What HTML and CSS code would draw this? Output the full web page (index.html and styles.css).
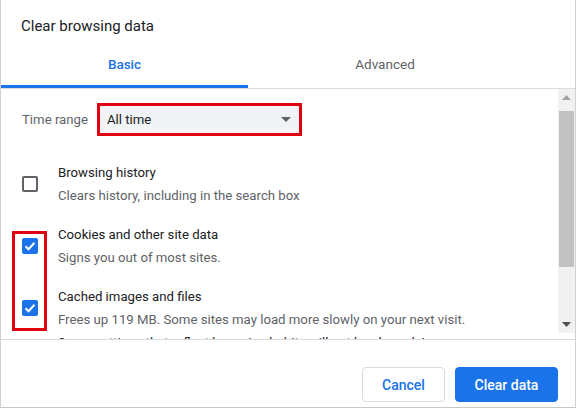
FILE: index.html
```html
<!DOCTYPE html>
<html>
<head>
<meta charset="utf-8">
<link rel="stylesheet" href="styles.css">
</head>
<body>
<div class="dialog">
  <div class="title">Clear browsing data</div>
  <div class="tabs">
    <div class="tab tab-basic active">Basic</div>
    <div class="tab tab-adv">Advanced</div>
  </div>
  <div class="body">
    <div class="content">
      <div class="time-row">
        <span class="time-label">Time range</span>
        <div class="select">
          <span>All time</span>
          <svg class="caret" width="10" height="5" viewBox="0 0 10 5"><path d="M0 0h10L5 5z" fill="#5f6368"/></svg>
        </div>
      </div>
      <div class="item">
        <div class="cb"></div>
        <div class="txt">
          <div class="t1">Browsing history</div>
          <div class="t2">Clears history, including in the search box</div>
        </div>
      </div>
      <div class="item">
        <div class="cb checked"><svg width="12" height="10" viewBox="0 0 12 10"><path d="M1.5 5.2l3 3L10.5 1.8" fill="none" stroke="#fff" stroke-width="2"/></svg></div>
        <div class="txt">
          <div class="t1">Cookies and other site data</div>
          <div class="t2">Signs you out of most sites.</div>
        </div>
      </div>
      <div class="item">
        <div class="cb checked"><svg width="12" height="10" viewBox="0 0 12 10"><path d="M1.5 5.2l3 3L10.5 1.8" fill="none" stroke="#fff" stroke-width="2"/></svg></div>
        <div class="txt">
          <div class="t1">Cached images and files</div>
          <div class="t2">Frees up 119 MB. Some sites may load more slowly on your next visit.</div>
          <div class="t1 clip">Some settings that reflect browsing habits will not be cleared. Learn more</div>
        </div>
      </div>
      <div class="mark"></div>
    </div>
    <div class="scrollbar">
      <div class="sb-btn"><svg width="9" height="5" viewBox="0 0 9 5"><path d="M0 5h9L4.5 0z" fill="#a3a3a3"/></svg></div>
      <div class="sb-thumb"></div>
      <div class="sb-track"></div>
      <div class="sb-btn"><svg width="9" height="5" viewBox="0 0 9 5"><path d="M0 0h9L4.5 5z" fill="#505050"/></svg></div>
    </div>
  </div>
  <div class="footer">
    <button class="btn cancel">Cancel</button>
    <button class="btn primary">Clear data</button>
  </div>
</div>
</body>
</html>
```

FILE: styles.css
```css
* { box-sizing: border-box; }
html, body { margin: 0; padding: 0; background: #fff; }
body {
  width: 576px;
  height: 409px;
  font-family: Roboto, "Liberation Sans", Arial, sans-serif;
  color: #202124;
}
.dialog {
  width: 576px;
  height: 408px;
  border-left: 1px solid #d0d0d0;
  border-right: 1px solid #d0d0d0;
  border-bottom: 1px solid #c8c8c8;
  display: flex;
  flex-direction: column;
}
.title {
  height: 44px;
  padding: 15px 0 0 20px;
  font-size: 15px;
  line-height: 22px;
  color: #202124;
}
.tabs {
  display: flex;
  height: 45px;
  border-bottom: 1px solid #dadce0;
}
.tab {
  font-size: 13.5px;
  line-height: 20px;
  padding-top: 10px;
  text-align: center;
  color: #5f6368;
}
.tab-basic {
  width: 247px;
  color: #1a73e8;
  font-weight: 500;
  border-bottom: 3px solid #1a73e8;
}
.tab-adv { width: 274px; }
.body {
  display: flex;
  height: 251px;
  border-bottom: 1px solid #dadce0;
  overflow: hidden;
}
.content {
  flex: 1;
  position: relative;
  overflow: hidden;
  padding-top: 14px;
}
.time-row {
  display: flex;
  align-items: center;
  height: 33px;
  padding-left: 21px;
}
.time-label {
  font-size: 13.2px;
  color: #5f6368;
  width: 75px;
}
.select {
  width: 205px;
  height: 33px;
  border: 3px solid #e0000f;
  background: #f1f3f4;
  display: flex;
  align-items: center;
  justify-content: space-between;
  padding: 0 8px 0 7px;
  font-size: 13.2px;
  color: #202124;
}
.item {
  display: flex;
  align-items: flex-start;
  padding-left: 21px;
  margin-top: 27px;
}
.item + .item { margin-top: 19px; }
.cb {
  width: 16px;
  height: 16px;
  margin-top: 13px;
  border: 2px solid #5f6368;
  border-radius: 2px;
  flex: none;
  display: flex;
  align-items: center;
  justify-content: center;
}
.cb.checked {
  background: #1a73e8;
  border-color: #1a73e8;
}
.txt { margin-left: 20px; }
.t1 {
  font-size: 13.2px;
  line-height: 20px;
  color: #202124;
  white-space: nowrap;
}
.t2 {
  font-size: 13.2px;
  line-height: 20px;
  margin-top: 3px;
  color: #5f6368;
  white-space: nowrap;
}
.t1.clip { margin-top: 3px; }
.mark {
  position: absolute;
  left: 11px;
  top: 142px;
  width: 35px;
  height: 100px;
  border: 3px solid #e0000f;
}
.scrollbar {
  width: 17px;
  height: 244px;
  background: #f1f1f1;
  display: flex;
  flex-direction: column;
  flex: none;
}
.sb-btn {
  height: 17px;
  display: flex;
  align-items: center;
  justify-content: center;
}
.sb-thumb {
  margin: 5px 1px 0 1px;
  height: 156px;
  background: #c1c1c1;
}
.sb-track { flex: 1; }
.footer {
  flex: 1;
  display: flex;
  justify-content: flex-end;
  align-items: flex-start;
  padding: 27px 17px 0 0;
  gap: 10px;
}
.btn {
  font-family: Roboto, "Liberation Sans", Arial, sans-serif;
  font-size: 14px;
  font-weight: 500;
  height: 35px;
  border-radius: 4px;
  padding: 0;
}
.cancel {
  width: 83px;
  background: #fff;
  border: 1px solid #dadce0;
  color: #1a73e8;
}
.primary {
  width: 103px;
  background: #1a73e8;
  border: 1px solid #1a73e8;
  color: #fff;
}
```
